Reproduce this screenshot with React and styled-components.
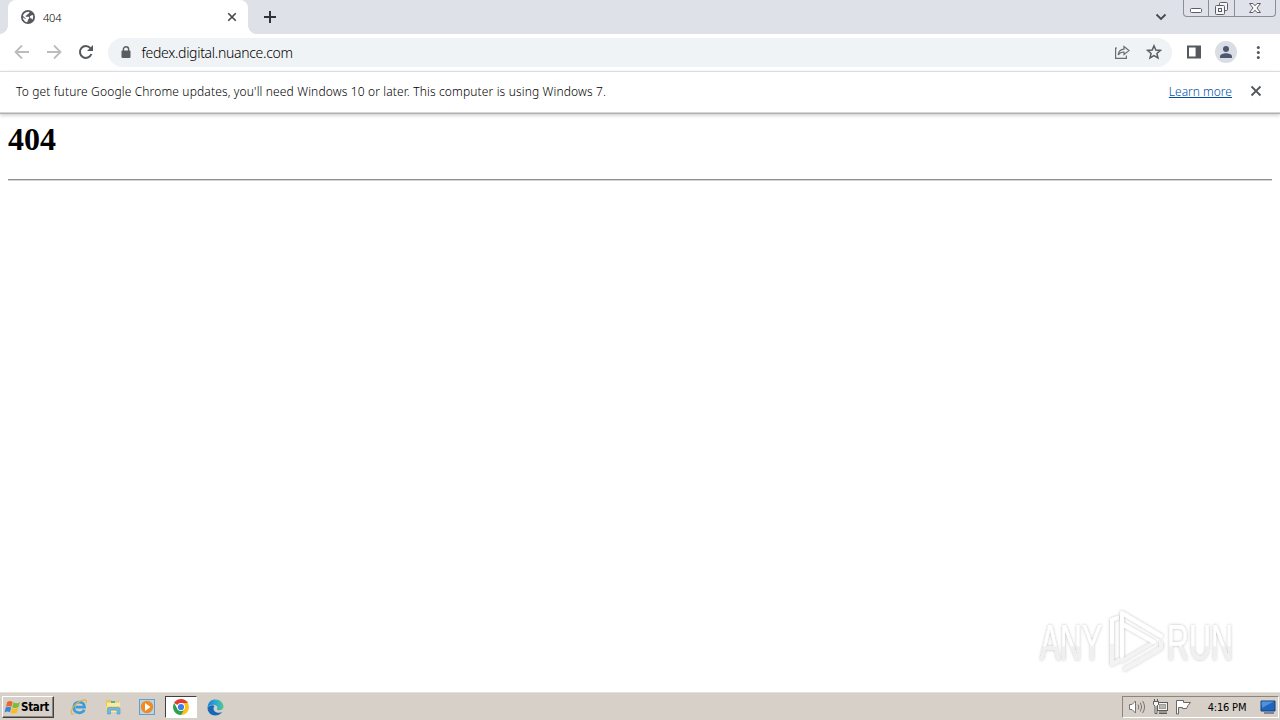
import React from 'react'
import styled, { createGlobalStyle } from 'styled-components'

const GlobalStyle = createGlobalStyle`
  * { box-sizing: border-box; }
  body {
    margin: 0;
    overflow: hidden;
    background: #fff;
    font-family: "DejaVu Sans Condensed", "DejaVu Sans", sans-serif;
  }
  svg { display: block; flex: none; }
`

const Screen = styled.div`
  width: 1280px;
  height: 720px;
  display: flex;
  flex-direction: column;
  background: #fff;
`

const TabStrip = styled.div`
  height: 34px;
  flex: none;
  display: flex;
  align-items: flex-start;
  padding-left: 8px;
  background: #dee1e8;
`

const Tab = styled.div`
  position: relative;
  width: 240px;
  height: 34px;
  display: flex;
  align-items: center;
  padding: 0 11px 0 13px;
  background: #fff;
  border-radius: 8px 8px 0 0;

  &::before, &::after {
    content: "";
    position: absolute;
    bottom: 0;
    width: 8px;
    height: 8px;
  }
  &::before {
    left: -8px;
    background: radial-gradient(circle at 0 0, transparent 7.5px, #fff 8px);
  }
  &::after {
    right: -8px;
    background: radial-gradient(circle at 100% 0, transparent 7.5px, #fff 8px);
  }
`

const TabTitle = styled.span`
  flex: 1;
  margin-left: 8px;
  font-family: "Noto Sans", sans-serif;
  font-weight: 300;
  font-size: 11px;
  letter-spacing: -0.2px;
  color: #000;
`

const NewTab = styled.div`
  margin: 10px 0 0 15px;
`

const TabSearch = styled.div`
  margin: 12px 16px 0 auto;
`

const WindowButtons = styled.div`
  display: flex;
  height: 17px;
  margin-right: 4px;
  border: 1px solid #8b8e96;
  border-top: 0;
  border-radius: 0 0 4px 4px;
  background: #dfe2e8;
`

const WindowButton = styled.div`
  width: ${p => p.$width}px;
  height: 16px;
  display: flex;
  justify-content: center;
  border-left: ${p => p.$first ? '0' : '1px solid #8b8e96'};
`

const Toolbar = styled.div`
  height: 37px;
  flex: none;
  display: flex;
  align-items: center;
  padding: 0 14px;
  background: #fff;
`

const NavButtons = styled.div`
  display: flex;
  gap: 16px;
  margin: -2px 14px 0 0;
`

const AddressBar = styled.div`
  width: 1064px;
  height: 29px;
  display: flex;
  align-items: center;
  padding: 0 10px 0 12px;
  border-radius: 15px;
  background: #f0f3f6;
`

const Url = styled.span`
  flex: 1;
  margin-left: 9.5px;
  font-family: "Noto Sans", sans-serif;
  font-weight: 300;
  font-size: 14px;
  letter-spacing: -0.3px;
  color: #000;
`

const BarIcons = styled.div`
  display: flex;
  gap: 16px;
  margin-top: -2px;
`

const ProfileIcons = styled.div`
  display: flex;
  align-items: center;
  gap: 13px;
  margin: -2px 0 0 14px;
`

const InfoBar = styled.div`
  position: relative;
  height: 42px;
  flex: none;
  display: flex;
  align-items: center;
  padding: 0 18px 2px 16px;
  border-top: 1px solid #dadce0;
  border-bottom: 1px solid #d6d6d6;
  background: #fff;
  font-family: "Noto Sans", sans-serif;
  font-weight: 300;
  font-size: 12px;
  color: #000;
  box-shadow: 0 1px 0 #b0b0b0, 0 2px 4px #c4c4c4;
`

const InfoText = styled.span`
  flex: 1;
  white-space: nowrap;
  letter-spacing: 0.145px;
`

const LearnMore = styled.a`
  color: #004fa8;
  text-decoration: underline;
  margin-right: 18px;
`

const Page = styled.main`
  flex: 1;
  padding: 8px;
  font-family: "Liberation Serif", serif;
`

const Heading = styled.h1`
  margin: 0 0 21px;
  font-size: 32px;
  line-height: 37px;
  color: #000;
`

const Rule = styled.hr`
  margin: 0;
  border: 0;
  border-top: 1px solid #8f9191;
  border-bottom: 1px solid #d4d4d4;
`

const Watermark = styled.div`
  position: absolute;
  left: 1030px;
  top: 602px;
`

const TaskBar = styled.footer`
  height: 27px;
  flex: none;
  display: flex;
  align-items: center;
  padding: 1px 1px 0 2px;
  background: #d6d0c8;
  box-shadow: 0 -1px 0 #e4e0da;
`

const StartButton = styled.div`
  width: 52px;
  height: 22px;
  display: flex;
  align-items: center;
  padding-left: 1px;
  border: 1px solid;
  border-color: #fff #404040 #404040 #fff;
  box-shadow: inset -1px -1px 0 #8a867f;
  font-size: 11.5px;
  font-weight: bold;
  letter-spacing: -0.3px;
  color: #000;
`

const QuickLaunch = styled.div`
  display: flex;
  align-items: center;
  margin-left: 8px;
`

const Launcher = styled.div`
  width: ${p => p.$active ? 32 : 34}px;
  height: 22px;
  margin: 0 ${p => p.$active ? 1 : 0}px;
  display: flex;
  align-items: center;
  justify-content: center;
  border: ${p => p.$active ? '1px solid' : '0'};
  border-color: #404040 #fff #fff #404040;
  background: ${p => p.$active ? '#fff' : 'transparent'};
`

const Tray = styled.div`
  width: 157px;
  height: 22px;
  display: flex;
  align-items: center;
  margin-left: auto;
  padding: 0 2px 0 5px;
  border: 1px solid;
  border-color: #8a867f #fff #fff #8a867f;
`

const TrayIcons = styled.div`
  display: flex;
  gap: 6px;
`

const Clock = styled.span`
  flex: 1;
  padding-left: 2px;
  text-align: center;
  white-space: nowrap;
  font-size: 11px;
  letter-spacing: -0.2px;
  color: #000;
`

const Cross = ({ size, color, width = 1.8 }) => (
  <svg width={size} height={size} viewBox="0 0 12 12" stroke={color} strokeWidth={width}>
    <path d="M1.5 1.5L10.5 10.5M10.5 1.5L1.5 10.5" />
  </svg>
)

const GlobeIcon = () => (
  <svg width="14" height="14" viewBox="0 0 14 14">
    <circle cx="7" cy="7" r="7" fill="#55585c" />
    <path d="M8.2 1.8C8.8 3 7.8 3.8 6.6 4C6.4 5.2 5.4 5.4 4.6 5.6L4.8 6.8H7.6C8.8 7.4 8.4 8.6 7.6 9C6.8 9.4 7 10.8 6.2 12.2C3.6 11.8 1.9 9.6 1.8 7.2L4.6 9.2V8.4L1.9 5.8C2.8 3.4 5 1.8 8.2 1.8Z" fill="#fff" />
    <path d="M10 5.6L11.8 5C12.4 6.6 12.2 8.4 11.2 9.8L10.4 8.2H9.4L8.8 6.6Z" fill="#fff" />
  </svg>
)

const PlusIcon = () => (
  <svg width="14" height="14" viewBox="0 0 14 14" stroke="#303438" strokeWidth="2">
    <path d="M7 1V13M1 7H13" />
  </svg>
)

const ChevronIcon = () => (
  <svg width="12" height="10" viewBox="0 0 12 10" fill="none" stroke="#45494d" strokeWidth="1.8">
    <path d="M1.5 2.5L6 7L10.5 2.5" />
  </svg>
)

const ArrowIcon = ({ flip }) => (
  <svg width="16" height="16" viewBox="0 0 16 16" fill="none" stroke="#babcbe" strokeWidth="1.8">
    <path d={flip ? 'M1 8H14M8 1.5L14.5 8L8 14.5' : 'M15 8H2M8 1.5L1.5 8L8 14.5'} />
  </svg>
)

const ReloadIcon = () => (
  <svg width="16" height="16" viewBox="0 0 16 16" fill="none">
    <path d="M13.4 10A5.9 5.9 0 1 1 12.4 4.2" stroke="#55585c" strokeWidth="2" />
    <path d="M15 1V7H9Z" fill="#55585c" />
  </svg>
)

const LockIcon = () => (
  <svg width="12" height="14" viewBox="0 0 12 14">
    <path d="M3.4 5.5V3.3A2.6 2.6 0 0 1 8.6 3.3V5.5" fill="none" stroke="#5a5d61" strokeWidth="1.4" />
    <rect x="1.5" y="4.5" width="9" height="7.5" rx="1" fill="#5a5d61" />
  </svg>
)

const ShareIcon = () => (
  <svg width="16" height="16" viewBox="0 0 16 16" fill="none" stroke="#696c70" strokeWidth="1.2">
    <path d="M3 4H1.6V14.4H12.4V11.5" />
    <path d="M4.2 11C4.6 7.3 6.8 5.4 10 5.2V2.6L15 6.6L10 10.5V8C7.2 8 5.5 9 4.2 11Z" />
  </svg>
)

const StarIcon = () => (
  <svg width="16" height="16" viewBox="0 0 16 16" fill="none" stroke="#5a5d61" strokeWidth="1.5">
    <path d="M8 1.8L9.8 6L14.4 6.4L10.9 9.4L12 13.9L8 11.5L4 13.9L5.1 9.4L1.6 6.4L6.2 6Z" />
  </svg>
)

const SidePanelIcon = () => (
  <svg width="16" height="16" viewBox="0 0 16 16">
    <path d="M1 1.5H15V14.5H1ZM3 3.5V12.5H9.6V3.5Z" fill="#55585c" fillRule="evenodd" />
  </svg>
)

const ProfileIcon = () => (
  <svg width="22" height="22" viewBox="0 0 22 22">
    <circle cx="11" cy="11" r="11" fill="#dadde3" />
    <circle cx="11" cy="8" r="3" fill="#4d5870" />
    <path d="M5 17V15.4C5 13.2 8.5 12.2 11 12.2S17 13.2 17 15.4V17Z" fill="#4d5870" />
  </svg>
)

const MenuIcon = () => (
  <svg width="16" height="16" viewBox="0 0 16 16" fill="#55585c">
    <circle cx="8.3" cy="3.4" r="1.5" />
    <circle cx="8.3" cy="8.5" r="1.5" />
    <circle cx="8.3" cy="13.6" r="1.5" />
  </svg>
)

const MinimizeIcon = () => (
  <svg width="14" height="16" viewBox="0 0 14 16">
    <rect x="1.5" y="8.5" width="11" height="4" rx="1" fill="#fff" stroke="#5b5e66" />
  </svg>
)

const RestoreIcon = () => (
  <svg width="16" height="16" viewBox="0 0 16 16" fill="#f4f5f7" stroke="#5b5e66">
    <rect x="5.5" y="2.5" width="8" height="8" rx="1" />
    <rect x="1.5" y="5.5" width="9" height="9" rx="1" />
    <rect x="4.5" y="8.5" width="3" height="3" />
  </svg>
)

const CloseWindowIcon = () => (
  <svg width="14" height="16" viewBox="0 0 14 16">
    <path d="M1.5 3.5H5L7 5.8L9 3.5H12.5L9 8L12.5 12.5H9L7 10.2L5 12.5H1.5L5 8Z" fill="#fafafa" stroke="#5b5e66" />
  </svg>
)

const WindowsLogo = () => (
  <svg width="17" height="17" viewBox="0 0 15 16">
    <path d="M2.5 2.8C4.2 1.6 6 1.8 7.7 2.8L6.5 7.3C5 6.3 3 6.3 1.3 7.3Z" fill="#ed642d" />
    <path d="M8.4 3.2C10.4 4.2 12.2 4.2 14.5 3L13.2 7.5C11.2 8.8 9 8.8 7.2 7.7Z" fill="#80ba39" />
    <path d="M1.1 8C3 6.9 4.6 7 6.3 8L5.1 12.5C3.5 11.4 1.6 11.5 0 12.6Z" fill="#3487d6" />
    <path d="M7 8.4C9 9.6 11 9.5 13 8.3L11.8 12.8C9.8 14 7.6 14.1 5.8 12.9Z" fill="#f9bd22" />
  </svg>
)

const IeIcon = () => (
  <svg width="18" height="18" viewBox="0 0 18 18" fill="none">
    <path d="M14.3 11.8C12.4 16 4 16.2 3.7 9.3C3.7 2.4 14.6 2.2 14.6 9.2H5.5" stroke="#3b9cd9" strokeWidth="2.7" />
    <path d="M3.5 15.8C-1 17 1 10 6.8 5.3C12 1.2 18 .3 16 5" stroke="#dcb44c" strokeWidth="1.2" />
  </svg>
)

const ExplorerIcon = () => (
  <svg width="18" height="18" viewBox="0 0 18 18">
    <path d="M2 2H7L8.5 3.5H15V14H2Z" fill="#e8c65b" />
    <path d="M3 4.5H16V14H3Z" fill="#f9e9a1" />
    <path d="M7 3H11V5H7Z" fill="#54b58d" />
    <path d="M2 8H16V13H2Z" fill="#f5d97b" />
    <path d="M3.5 16V11Q3.5 9.5 5 9.5H14Q16 9.5 16 11V16H13V12H6.5V16Z" fill="#6fb9e4" stroke="#4c98c7" strokeWidth=".6" />
  </svg>
)

const MediaPlayerIcon = () => (
  <svg width="18" height="18" viewBox="0 0 18 18">
    <rect x="1.5" y="1.5" width="15" height="15" fill="#b3d6ef" stroke="#6a9cc8" />
    <circle cx="9" cy="9" r="6.2" fill="#f18a20" />
    <path d="M7 5L12.5 9L7 13Z" fill="#fff" />
  </svg>
)

const ChromeIcon = () => (
  <svg width="16" height="16" viewBox="0 0 16 16">
    <path d="M8 8L1.1 4A8 8 0 0 1 14.9 4Z" fill="#e33b2e" />
    <path d="M8 8V4H14.9A8 8 0 0 1 8 16Z" fill="#fbc116" />
    <path d="M8 16A8 8 0 0 1 1.1 4L4.5 10L8 12L11.5 10Z" fill="#2da14c" />
    <circle cx="8" cy="8" r="4" fill="#fff" />
    <circle cx="8" cy="8" r="3.1" fill="#3f7de8" />
  </svg>
)

const EdgeIcon = () => (
  <svg width="17" height="17" viewBox="0 0 17 17">
    <defs>
      <linearGradient id="edgeTop" x1="0" x2="1">
        <stop offset="0" stopColor="#1c80cf" />
        <stop offset=".5" stopColor="#2aa9d8" />
        <stop offset="1" stopColor="#55c786" />
      </linearGradient>
    </defs>
    <path d="M.5 9C.8 3 4 .5 8.5 .5C13 .5 16.5 4 16.5 7.5C16.5 11.5 11 12 9.8 10.5C11.5 8 9.5 6 6.7 5.8C4 5.6 1.5 6.8 .5 9Z" fill="url(#edgeTop)" />
    <path d="M.5 9C2 6 6 5.5 7.5 7C5.5 9 6.5 13.5 11 13.8C12.8 13.9 14 13.3 15.4 12.7C12 18.3 1 18 .5 9Z" fill="#1769b5" />
  </svg>
)

const SpeakerIcon = () => (
  <svg width="18" height="16" viewBox="0 0 18 16" fill="none" stroke="#777470">
    <path d="M1.5 5.5H4L7.5 2V14L4 10.5H1.5Z" fill="#fff" />
    <path d="M10 5.5Q11.6 8 10 10.5M12.3 3.5Q15 8 12.3 12.5M14.6 2Q18.5 8 14.6 14" />
  </svg>
)

const NetworkIcon = () => (
  <svg width="17" height="16" viewBox="0 0 17 16" fill="#f4f4f4" stroke="#5d5a57">
    <rect x="5.5" y="3.5" width="10" height="8" />
    <rect x="7.5" y="5.5" width="6" height="4" fill="#b9b6b1" stroke="#a09d98" />
    <path d="M7 14.5H15M7 13H15" />
    <path d="M1.5 2.5H6.5V5.5L5 7V14.5H3V7L1.5 5.5ZM2.5 0V2.5M5.5 0V2.5" />
  </svg>
)

const FlagIcon = () => (
  <svg width="17" height="16" viewBox="0 0 17 16" fill="#fff" stroke="#6b6864">
    <path d="M1.5 1.5H8.5V3.5H15.5L13 6.5L11.5 9.5H7.5V8.5H3.5V15H1.5Z" />
  </svg>
)

const DesktopIcon = () => (
  <svg width="16" height="16" viewBox="0 0 16 16">
    <path d="M1 2H15V12H1Z" fill="#1f65bd" stroke="#173f7d" />
    <path d="M1.5 2.5H14L2 9Z" fill="#4f91dc" />
    <path d="M4 14H14" stroke="#5b6d88" strokeWidth="1.5" />
  </svg>
)

const AnyRunLogo = () => (
  <svg width="250" height="80" viewBox="0 0 250 80">
    <defs>
      <linearGradient id="letterFill" x1="0" y1="0" x2="0" y2="1">
        <stop offset=".55" stopColor="#fff" />
        <stop offset=".58" stopColor="#f0f0f0" />
      </linearGradient>
      <filter id="logoShadow" x="-10%" y="-10%" width="120%" height="120%">
        <feDropShadow dx="0" dy="0" stdDeviation="1.8" floodColor="#000" floodOpacity=".28" />
      </filter>
    </defs>
    <g filter="url(#logoShadow)">
      <g fontFamily="Liberation Sans Narrow, Liberation Sans, sans-serif" fontSize="50" fill="url(#letterFill)">
        <text x="10" y="57.5" textLength="62" lengthAdjust="spacingAndGlyphs">ANY</text>
        <text x="137" y="57.5" textLength="66" lengthAdjust="spacingAndGlyphs">RUN</text>
      </g>
      <g fill="none" strokeLinejoin="round" strokeLinecap="round">
        <path d="M82 18V62L90 58M95 67L131 46V41" stroke="#f3f3f3" strokeWidth="4" />
        <path d="M92 22V59L124 40" stroke="#f3f3f3" strokeWidth="3" />
        <path d="M92 54V11L131 34M92 22L124 40M82 40V18L87 16" stroke="#fff" strokeWidth="4" />
      </g>
    </g>
  </svg>
)

const Browser = () => (
  <>
    <TabStrip>
      <Tab>
        <GlobeIcon />
        <TabTitle>404</TabTitle>
        <Cross size={10} color="#45494d" width={2} />
      </Tab>
      <NewTab><PlusIcon /></NewTab>
      <TabSearch><ChevronIcon /></TabSearch>
      <WindowButtons>
        <WindowButton $width={24} $first><MinimizeIcon /></WindowButton>
        <WindowButton $width={26}><RestoreIcon /></WindowButton>
        <WindowButton $width={41}><CloseWindowIcon /></WindowButton>
      </WindowButtons>
    </TabStrip>
    <Toolbar>
      <NavButtons>
        <ArrowIcon />
        <ArrowIcon flip />
        <ReloadIcon />
      </NavButtons>
      <AddressBar>
        <LockIcon />
        <Url>fedex.digital.nuance.com</Url>
        <BarIcons>
          <ShareIcon />
          <StarIcon />
        </BarIcons>
      </AddressBar>
      <ProfileIcons>
        <SidePanelIcon />
        <ProfileIcon />
        <MenuIcon />
      </ProfileIcons>
    </Toolbar>
    <InfoBar>
      <InfoText>To get future Google Chrome updates, you'll need Windows 10 or later. This computer is using Windows 7.</InfoText>
      <LearnMore>Learn more</LearnMore>
      <Cross size={12} color="#55585c" />
    </InfoBar>
  </>
)

const Taskbar = () => (
  <TaskBar>
    <StartButton><WindowsLogo />Start</StartButton>
    <QuickLaunch>
      <Launcher><IeIcon /></Launcher>
      <Launcher><ExplorerIcon /></Launcher>
      <Launcher><MediaPlayerIcon /></Launcher>
      <Launcher $active><ChromeIcon /></Launcher>
      <Launcher><EdgeIcon /></Launcher>
    </QuickLaunch>
    <Tray>
      <TrayIcons>
        <SpeakerIcon />
        <NetworkIcon />
        <FlagIcon />
      </TrayIcons>
      <Clock>4:16 PM</Clock>
      <DesktopIcon />
    </Tray>
  </TaskBar>
)

const App = () => {
  return (
    <Screen>
      <GlobalStyle />
      <Browser />
      <Page>
        <Heading>404</Heading>
        <Rule />
      </Page>
      <Watermark><AnyRunLogo /></Watermark>
      <Taskbar />
    </Screen>
  )
}

export default App
